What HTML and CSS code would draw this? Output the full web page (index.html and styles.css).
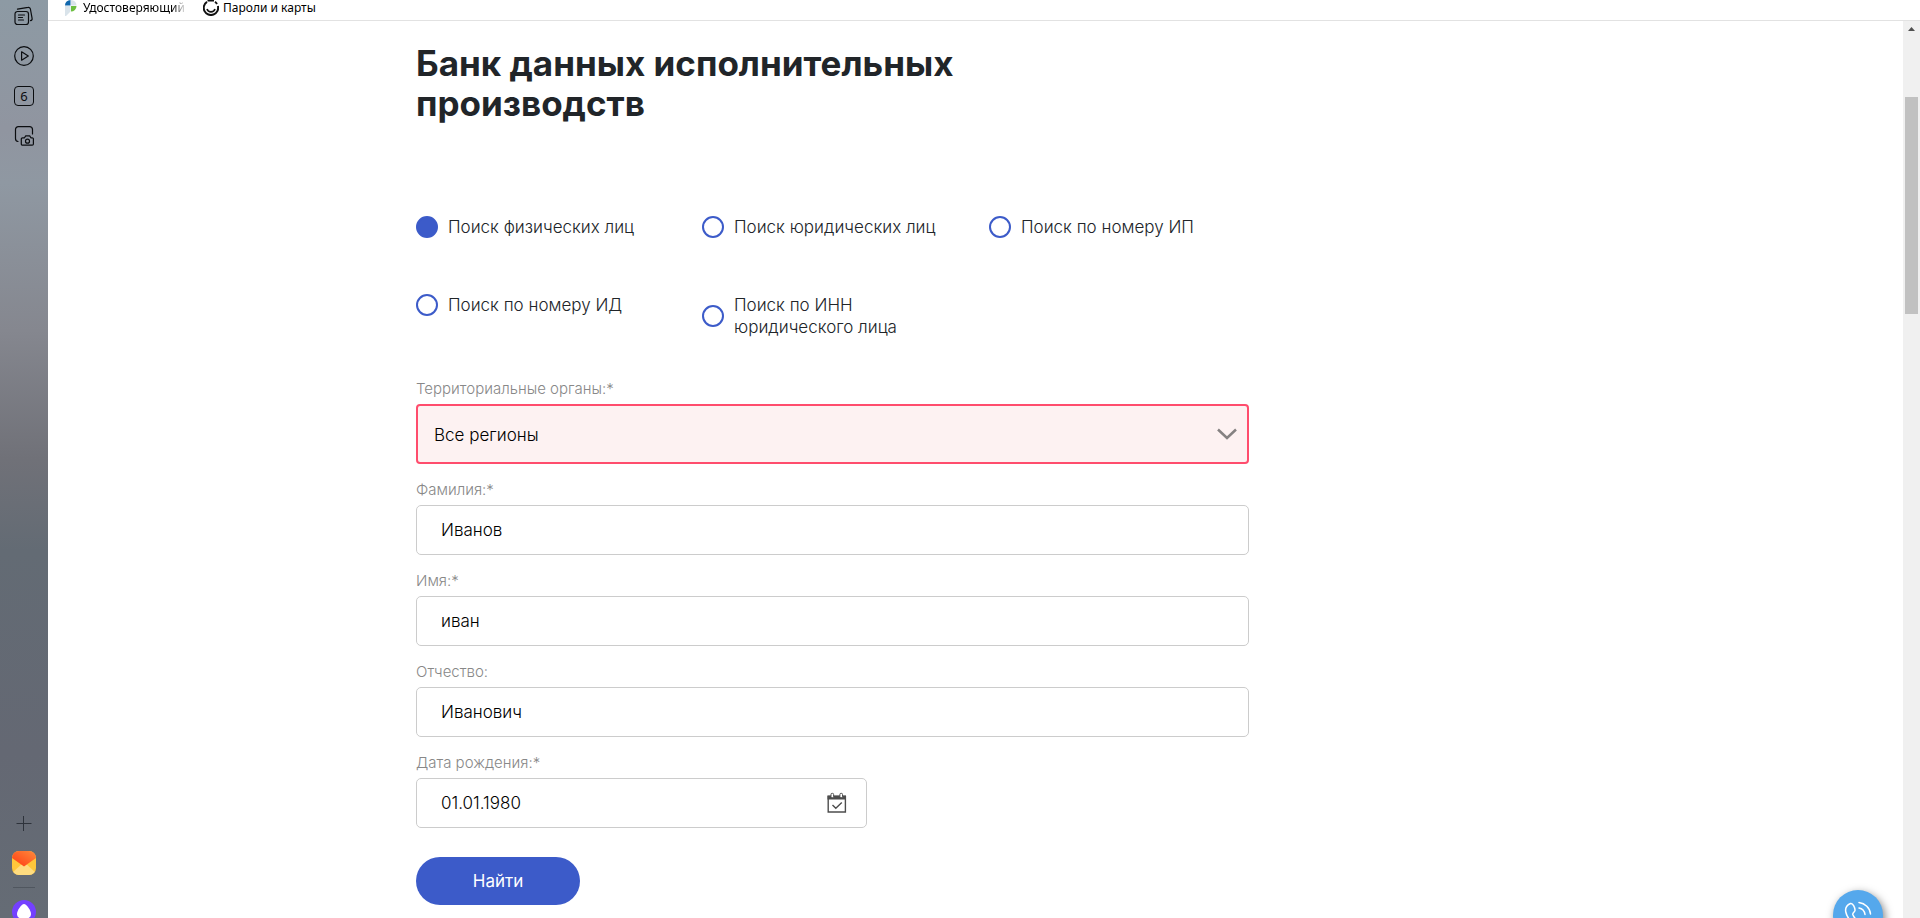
FILE: index.html
```html
<!DOCTYPE html>
<html lang="ru">
<head>
<meta charset="utf-8">
<meta name="viewport" content="width=device-width, initial-scale=1">
<title>Банк данных исполнительных производств</title>
<link rel="stylesheet" href="styles.css">
</head>
<body>
<div class="browser">
  <aside class="sidebar">
    <div class="side-group">
      <button class="side-btn" type="button" aria-label="Коллекции">
        <svg width="20" height="20" viewBox="0 0 20 20" fill="none" stroke="#0b0d10" stroke-width="1.2" stroke-linecap="round"><path d="M3.500 5.500h8.500a2.500 2.500 0 0 1 2.500 2.500v8a2.500 2.500 0 0 1-2.500 2.500H3.500A2.500 2.500 0 0 1 1 16V8a2.500 2.500 0 0 1 2.500-2.500z"/><path d="M4.500 9h6M4.500 11.500h4M4.500 14h5"/><path d="M3.500 3.200 14 1.400a2 2 0 0 1 2.400 1.600l1.700 9.300a2 2 0 0 1-1.600 2.300"/></svg>
      </button>
      <button class="side-btn" type="button" aria-label="Видео">
        <svg width="20" height="20" viewBox="0 0 20 20" fill="none" stroke="#0b0d10" stroke-width="1.200" stroke-linejoin="round"><circle cx="10" cy="10" r="9.300"/><path d="M7.600 5.800v8.400l6.700-4.200z"/></svg>
      </button>
      <button class="side-btn" type="button" aria-label="Вкладки"><span class="tab-count">6</span></button>
      <button class="side-btn" type="button" aria-label="Скриншот">
        <svg width="20" height="20" viewBox="0 0 20 20" fill="none" stroke="#0b0d10" stroke-width="1.200" stroke-linecap="round" stroke-linejoin="round"><path d="M4 15.500A3 3 0 0 1 1.500 12.500V3.500a2.800 2.800 0 0 1 2.800-2.800h11.400a2.800 2.800 0 0 1 2.800 2.800V8"/><path d="M8.500 11.800h2l1.200-1.900h4l1.200 1.900h1.300a1.200 1.200 0 0 1 1.200 1.200v5a1.200 1.200 0 0 1-1.200 1.200H8.500A1.200 1.200 0 0 1 7.300 18v-5a1.200 1.200 0 0 1 1.200-1.200z"/><circle cx="13.500" cy="15.200" r="2"/></svg>
      </button>
    </div>
    <div class="side-group side-group-bottom">
      <button class="side-btn side-add" type="button" aria-label="Добавить">
        <svg width="16" height="16" viewBox="0 0 16 16" stroke="#2e333b" stroke-width="1"><path d="M.5 8.500h15M7.500 1v15"/></svg>
      </button>
      <button class="side-btn side-app" type="button" aria-label="Почта">
        <svg width="24" height="24" viewBox="0 0 24 24"><defs><clipPath id="mail-clip"><rect width="24" height="24" rx="7"/></clipPath><linearGradient id="mail-red" x1="1" y1="0" x2="0" y2="1"><stop offset="0" stop-color="#ff8a3c"/><stop offset="1" stop-color="#ff3a12"/></linearGradient></defs><g clip-path="url(#mail-clip)"><path fill="#ffc73b" d="M0 0h24v24H0z"/><path fill="#ffdc80" d="M0 22 12 11l12 11v2H0z"/><path fill="url(#mail-red)" d="M0 0h24v7L12 15.500 0 7z"/></g></svg>
      </button>
      <hr class="side-line">
      <button class="side-btn side-app" type="button" aria-label="Алиса">
        <svg width="24" height="24" viewBox="0 0 24 24"><circle cx="12" cy="12" r="12" fill="#7440ff"/><path fill="#fff" d="M12 4c2.500 0 7 6.500 7 10s-3 5-7 5-7-1.500-7-5 4.500-10 7-10z"/></svg>
      </button>
    </div>
  </aside>

  <div class="window">
    <nav class="bookmarks">
      <a class="bookmark bookmark-first" href="#">
        <svg width="12" height="16" viewBox="0 0 12 16"><path fill="#0f67ad" d="M5.500 0v5.500H0A5.500 5.500 0 0 1 5.500 0z"/><path fill="#d9e3ea" d="M6 0a5.500 5.500 0 0 1 5.500 5.500H6zM0 6h5.500v5.500L1 16H0z"/><path fill="#6cbf3f" d="M6 6h5.500A5.500 5.500 0 0 1 6 11.500z"/></svg>
        <span class="bookmark-fade">Удостоверяющий</span>
      </a>
      <a class="bookmark" href="#">
        <svg width="16" height="16" viewBox="0 0 16 16" fill="none" stroke="#111" stroke-width="2"><path d="M4 1.800A7.200 7.200 0 1 0 14.900 6M12 1.800a7 7 0 0 1 2 2.200M4.500.6h6.500"/><path d="M4 9a4.200 4.200 0 0 0 8 0" stroke-width="1.600"/></svg>
        <span>Пароли и карты</span>
      </a>
    </nav>

    <div class="viewport">
      <main class="page">
        <div class="container">
          <h1 class="title">Банк данных исполнительных производств</h1>
          <form class="search">
            <div class="modes" role="radiogroup" aria-label="Вид поиска">
              <label class="mode"><input class="radio" type="radio" name="mode" checked><span>Поиск физических лиц</span></label>
              <label class="mode"><input class="radio" type="radio" name="mode"><span>Поиск юридических лиц</span></label>
              <label class="mode"><input class="radio" type="radio" name="mode"><span>Поиск по номеру ИП</span></label>
              <label class="mode"><input class="radio" type="radio" name="mode"><span>Поиск по номеру ИД</span></label>
              <label class="mode"><input class="radio" type="radio" name="mode"><span>Поиск по ИНН<br>юридического лица</span></label>
            </div>

            <div class="field">
              <label class="label" for="region">Территориальные органы:*</label>
              <div class="control">
                <select class="select" id="region"><option>Все регионы</option></select>
                <svg class="chevron" width="20" height="12" viewBox="0 0 20 12" fill="none" stroke="#858282" stroke-width="2.500"><path d="M1 1.500l9 8.500 9-8.500"/></svg>
              </div>
            </div>
            <div class="field">
              <label class="label" for="last">Фамилия:*</label>
              <input class="input" id="last" type="text" value="Иванов">
            </div>
            <div class="field">
              <label class="label" for="first">Имя:*</label>
              <input class="input" id="first" type="text" value="иван">
            </div>
            <div class="field">
              <label class="label" for="middle">Отчество:</label>
              <input class="input" id="middle" type="text" value="Иванович">
            </div>
            <div class="field field-date">
              <label class="label" for="birth">Дата рождения:*</label>
              <div class="control">
                <input class="input" id="birth" type="text" value="01.01.1980">
                <svg class="calendar" width="20" height="21" viewBox="0 0 20 21" fill="none"><path fill="#4d4d4d" d="M.5 3h18.500v4H.5z"/><path stroke="#4d4d4d" stroke-width="1.400" d="M1.200 4v15.500h17.200V4z"/><rect x="4" y=".7" width="2.600" height="4.600" rx="1.300" fill="#fff" stroke="#4d4d4d"/><rect x="12.900" y=".7" width="2.600" height="4.600" rx="1.300" fill="#fff" stroke="#4d4d4d"/><path stroke="#4d4d4d" stroke-width="1.400" d="M5.500 12.500l3.300 3.300 6-5.800"/></svg>
              </div>
            </div>
            <button class="submit" type="submit">Найти</button>
          </form>
        </div>
        <button class="call" type="button" aria-label="Позвонить">
          <svg width="28" height="28" viewBox="0 0 28 28" fill="none" stroke="#fff" stroke-width="1.500" stroke-linecap="round" stroke-linejoin="round"><path d="M6.500 2.500C3 4 1 7 1.800 11c1.400 6.500 7.500 13 14.200 15 3.500 1 6.500-.5 8-3.500.8-1.800-4.500-5-6-4.500s-2 2.500-3.200 2c-2.500-1-5-4-6-6.500-.5-1.500 2-2.500 2.200-4C11.200 7.500 9 1.700 6.500 2.500z"/><path d="M15 7c3 .5 5.500 3.200 6 6.500M15 1.500c6 .8 11 5.500 11.500 11.500"/></svg>
        </button>
      </main>
      <div class="scrollbar" aria-hidden="true">
        <svg class="scroll-arrow" width="7" height="4" viewBox="0 0 7 4" fill="#505050"><path d="M3.500 0 7 4H0z"/></svg>
        <div class="thumb"></div>
      </div>
    </div>
  </div>
</div>
</body>
</html>
```
FILE: styles.css
```css
* {
  box-sizing: border-box;
}

body {
  margin: 0;
  background: #fff;
  color: #212529;
  font: 300 17px/22px Inter, "Open Sans", sans-serif;
}

button {
  border: 0;
  padding: 0;
  background: none;
  font: inherit;
  cursor: pointer;
}

svg {
  display: block;
  flex: none;
}

.browser {
  display: flex;
  height: 100vh;
  overflow: hidden;
}

/* Browser side panel */
.sidebar {
  display: flex;
  flex: none;
  flex-direction: column;
  justify-content: space-between;
  width: 48px;
  padding-top: 6px;
  background: linear-gradient(#8d9aa4 0, #9095a0 14%, #8f98a2 20%, #85878f 36%, #707178 50%, #636b74 60%, #646873 82%, #656c75 100%);
}

.side-group {
  display: flex;
  flex-direction: column;
  align-items: center;
  gap: 20px;
}

.side-group-bottom {
  gap: 12px;
  margin-bottom: -6px;
}

.side-btn {
  display: grid;
  place-items: center;
  flex: none;
  width: 20px;
  height: 20px;
}

.side-add {
  margin-bottom: 6px;
}

.side-app {
  width: 24px;
  height: 24px;
}

.tab-count {
  width: 20px;
  height: 20px;
  border: 1px solid #0b0d10;
  border-radius: 4px;
  color: #0b0d10;
  font: 400 13px/18px "Noto Sans", sans-serif;
}

.side-line {
  width: 22px;
  height: 1px;
  margin: 0;
  border: 0;
  background: #50565f;
}

/* Bookmarks strip */
.window {
  display: flex;
  flex: 1;
  flex-direction: column;
  min-width: 0;
}

.bookmarks {
  display: flex;
  flex: none;
  gap: 14px;
  height: 21px;
  padding-left: 17px;
  border-bottom: 1px solid #e2e2e2;
}

.bookmark {
  display: flex;
  gap: 4px;
  height: 16px;
  color: #000;
  font: 400 12px/16px "Noto Sans", sans-serif;
  text-decoration: none;
  white-space: nowrap;
}

.bookmark-first {
  gap: 6px;
  width: 124px;
}

.bookmark-fade {
  overflow: hidden;
  mask-image: linear-gradient(90deg, #000 88%, rgba(0, 0, 0, 0.1));
}

/* Page */
.viewport {
  display: flex;
  flex: 1;
  min-height: 0;
}

.page {
  position: relative;
  flex: 1;
  min-width: 0;
  overflow: hidden;
}

.container {
  max-width: 1119px;
  margin: 0 auto;
  padding-top: 22px;
}

.title {
  max-width: 600px;
  margin: 0 0 93px;
  font: 700 35px/40px Inter, sans-serif;
}

.search {
  max-width: 833px;
}

.modes {
  display: grid;
  grid-template-columns: 286px 287px 1fr;
  align-items: start;
  row-gap: 56px;
  margin-bottom: 41px;
}

.mode {
  display: flex;
  align-items: center;
  gap: 10px;
  cursor: pointer;
}

.radio {
  appearance: none;
  flex: none;
  width: 22px;
  height: 22px;
  margin: 0;
  border: 2px solid #3c5bc9;
  border-radius: 50%;
  background: #fff;
}

.radio:checked {
  background: #3c5bc9;
}

.field {
  display: flex;
  flex-direction: column;
  gap: 5px;
  margin-bottom: 16px;
}

.field-date {
  max-width: 451px;
  margin-bottom: 29px;
}

.label {
  color: #888;
  font-size: 15px;
  line-height: 20px;
}

.control {
  position: relative;
}

.input,
.select {
  display: block;
  width: 100%;
  margin: 0;
  color: #000;
  font: inherit;
}

.input {
  height: 50px;
  padding: 0 24px;
  border: 1px solid #ccc;
  border-radius: 5px;
  background: #fff;
}

.select {
  appearance: none;
  height: 60px;
  padding: 2px 48px 0 16px;
  border: 2px solid #ff4d6d;
  border-radius: 4px;
  background: #fdf2f2;
}

.chevron,
.calendar {
  position: absolute;
  top: 50%;
  transform: translateY(-50%);
  pointer-events: none;
}

.chevron {
  right: 12px;
}

.calendar {
  right: 20px;
}

.submit {
  width: 164px;
  height: 48px;
  border-radius: 24px;
  background: #3c5bc9;
  color: #fff;
  font-weight: 400;
}

.call {
  position: absolute;
  right: 20px;
  bottom: -22px;
  display: grid;
  place-items: center;
  width: 50px;
  height: 50px;
  border-radius: 50%;
  background: #55a8ec;
  box-shadow: 2px 3px 8px rgba(0, 0, 0, 0.5);
}

/* Scroll track */
.scrollbar {
  display: flex;
  flex: none;
  flex-direction: column;
  align-items: center;
  width: 17px;
  padding-top: 6px;
  background: #f0f0f0;
}

.thumb {
  width: 13px;
  height: 24.3%;
  margin-top: 66px;
  background: #c1c1c1;
}
```
